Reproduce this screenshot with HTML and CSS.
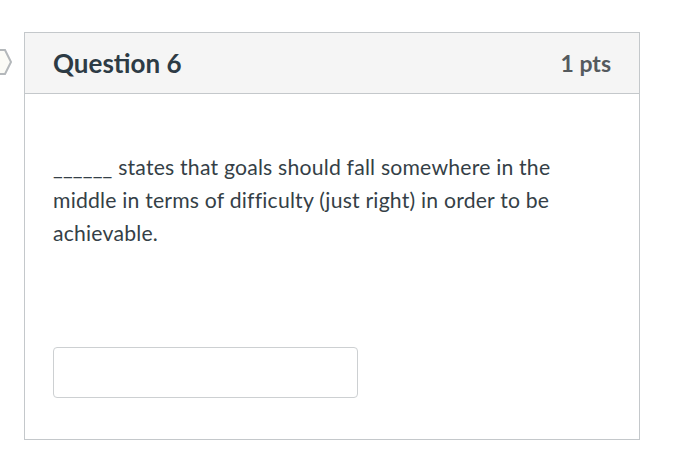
FILE: index.html
```html
<!DOCTYPE html>
<html lang="en">
<head>
<meta charset="utf-8">
<link rel="stylesheet" href="styles.css">
</head>
<body>
<div class="page">
  <div class="marker">
    <svg width="24" height="28" viewBox="0 0 24 28"><polygon points="-5,2 5,2 11,14 5,26 -5,26 -11,14" fill="#fbfbf6" stroke="#b4b8bb" stroke-width="2"/></svg>
  </div>
  <div class="card">
    <div class="card-header">
      <span class="title">Question 6</span>
      <span class="pts">1 pts</span>
    </div>
    <div class="card-body">
      <p class="question">______ states that goals should fall somewhere in the middle in terms of difficulty (just right) in order to be achievable.</p>
      <input class="answer" type="text">
    </div>
  </div>
</div>
</body>
</html>
```
FILE: styles.css
```css
html, body {
  margin: 0;
  padding: 0;
  background: #ffffff;
}
body {
  font-family: Lato, "Open Sans", sans-serif;
  color: #2d3b45;
}
.page {
  position: relative;
  padding: 32px 0 0 24px;
  width: 616px;
}
.marker {
  position: absolute;
  left: 0;
  top: 48px;
  line-height: 0;
}
.card {
  border: 1px solid #c4c8cb;
  background: #fff;
}
.card-header {
  display: flex;
  justify-content: space-between;
  align-items: center;
  height: 60px;
  padding: 0 28px;
  background: #f5f5f5;
  border-bottom: 1px solid #c4c8cb;
}
.title {
  font-weight: 700;
  font-size: 26px;
  color: #2d3b45;
}
.pts {
  font-weight: 700;
  font-size: 23px;
  color: #555a5e;
}
.card-body {
  padding: 57px 28px 41px 28px;
}
.question {
  max-width: 540px;
  margin: 0 0 97px 0;
  font-size: 21.2px;
  letter-spacing: 0.2px;
  line-height: 33px;
  color: #353f47;
}
.answer {
  display: block;
  box-sizing: border-box;
  width: 305px;
  height: 51px;
  margin: 0;
  border: 1px solid #cdd0d2;
  border-radius: 4px;
  background: #fff;
}
```
